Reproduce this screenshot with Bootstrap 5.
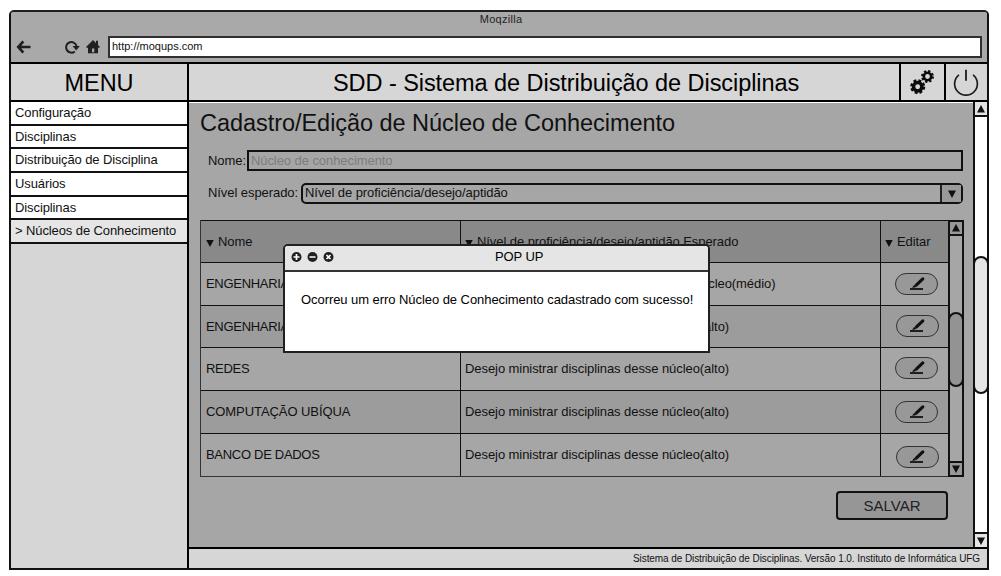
<!DOCTYPE html>
<html lang="pt-BR">
<head>
<meta charset="utf-8">
<meta name="viewport" content="width=device-width, initial-scale=1">
<title>SDD - Sistema de Distribuição de Disciplinas</title>
<link href="https://cdn.jsdelivr.net/npm/bootstrap@5.3.0/dist/css/bootstrap.min.css" rel="stylesheet">
<style>
  body { font-family: "Liberation Sans", Arial, sans-serif; font-size: 13px; line-height: 16px; letter-spacing: -.07px; color: #111; background: #fff; overflow: hidden; }
  svg { display: block; flex: none; }
  .browser { width: 980px; height: 560px; margin: 10px 0 0 9px; border: 2px solid #111; border-top-color: #231f20; border-radius: 5px 5px 0 0; background: #d6d6d6; }
  .chrome { height: 52px; background: #a9a9a9; border-bottom: 2px solid #000; border-radius: 3px 3px 0 0; }
  .chrome-title { font-size: 11px; line-height: 15px; letter-spacing: .28px; height: 24px; padding-left: 4px; color: #222; }
  .chrome-bar { height: 22px; padding: 0 5px; }
  .reload { margin-left: 32px; }
  .house { margin-left: 6px; }
  .address { height: 22px; border: 2px solid #332e2f; background: #fff; font-size: 11px; line-height: 17px; letter-spacing: 0; padding-left: 2px; }
  .menu-col { width: 178px; flex: none; border-right: 2px solid #000; }
  .head-cell { height: 38px; border-bottom: 2px solid #000; background: #d6d6d6; font-size: 23.5px; line-height: 38px; letter-spacing: -.06px; color: #000; }
  .app-title { padding-left: 144px; }
  .gear-cell { width: 45px; border-left: 2px solid #000; }
  .power-cell { width: 43px; border-left: 2px solid #000; }
  .menu-item { height: 23.67px; padding-left: 4px; border-bottom: 2px solid #111; background: #fff; line-height: 21px; letter-spacing: -.1px; }
  .menu-item.current { background: #e5e5e5; }
  .page-area { height: 445px; background: #a6a6a6; border-top: 1px solid #fff; padding: 0 11px; }
  .page-title { font-size: 23.5px; line-height: 28px; letter-spacing: -.045px; font-weight: 400; margin: 6px 0 13px; }
  .field-row { padding: 0 1px 0 8px; }
  .box-input { height: 21px; margin-left: 1px; border: 2px solid #111; line-height: 17px; padding-left: 2px; color: #7d7d7d; }
  .level-row { margin-top: 12px; }
  .level-row > span { padding-bottom: 2px; }
  .box-select { height: 21px; margin-left: 3px; border: 2px solid #111; border-radius: 5px; line-height: 16px; padding-left: 2px; }
  .select-arrow { width: 21px; height: 17px; border-left: 2px solid #222; background: #9a9a9a; }
  .grid-wrap { height: 257px; margin-top: 16px; }
  .grid-table { width: 748px; border-left: 1px solid #333; border-bottom: 1px solid #333; }
  .grid-row { height: 43px; border-top: 1px solid #111; }
  .grid-row.short { height: 42px; }
  .grid-row.head { height: 42px; background: #898989; }
  .grid-row.alt { background: #9c9c9c; }
  .c-name { width: 259px; padding-left: 5px; }
  .c-level { width: 420px; padding-left: 4px; border-left: 1px solid #111; }
  .c-edit { width: 68px; border-left: 1px solid #111; }
  .c-level.wide { padding-left: 36px; }
  .caps { letter-spacing: -.3px; }
  .pill { width: 43px; height: 22px; margin-left: 14px; padding: 0; border: 1px solid #333; border-radius: 11px; background: #989898; }
  .pill-shift { margin-left: 15px; }
  .pill-lift { margin-top: -2px; }
  .pill-drop { margin-top: 4px; }
  .inner-bar { width: 16px; border: 2px solid #111; background: #a6a6a6; }
  .inner-btn { height: 14px; background: #989898; }
  .inner-thumb { position: absolute; top: 90px; left: -2px; width: 16px; height: 75px; border: 2px solid #111; border-radius: 8px; background: #939393; }
  .save { width: 112px; height: 29px; border: 2px solid #111; border-radius: 4px; background: #969696; font-size: 15px; line-height: 25px; letter-spacing: 0; margin: 14px 16px 0 0; padding: 0; color: #222; }
  .outer-bar { width: 12px; flex: none; height: 445px; background: #fff; box-shadow: -2px 0 0 #111; }
  .outer-btn { height: 15px; background: #e5e5e5; }
  .btn-top { border-bottom: 2px solid #111; }
  .btn-bottom { border-top: 2px solid #111; }
  .outer-thumb { position: absolute; top: 154px; left: -2px; width: 16px; height: 138px; border: 2px solid #111; border-radius: 8px; background: #e5e5e5; }
  .foot { height: 21px; border-top: 2px solid #000; font-size: 10px; line-height: 20px; letter-spacing: -.081px; padding-right: 7px; background: #d6d6d6; }
  .popup { position: absolute; left: 283px; top: 244px; width: 427px; height: 109px; border: 2px solid #231f20; border-radius: 5px 5px 0 0; background: #fff; color: #000; }
  .popup-head { height: 26px; background: #e5e5e5; border-bottom: 2px solid #333; border-radius: 3px 3px 0 0; padding: 0 0 2px 6px; }
  .popup-title { margin-left: 161px; letter-spacing: -.1px; }
  .popup-text { padding: 20px 0 0 16px; letter-spacing: -.06px; }
</style>
</head>
<body>
<svg width="0" height="0" class="position-absolute" aria-hidden="true">
  <symbol id="down" viewBox="0 0 8 8"><path d="M0 .5h8L4 8z" fill="#111"/></symbol>
  <symbol id="up" viewBox="0 0 8 8"><path d="M0 7.500h8L4 0z" fill="#111"/></symbol>
  <symbol id="pencil" viewBox="0 0 41 20"><path d="M14 15h13" stroke="#111" stroke-width="1.800"/><path d="M20.500 10.800 26.800 4.900" stroke="#111" stroke-width="3.200" stroke-linecap="round"/><path d="M18.200 10.800l2.300 2.300-4.400 1z" fill="#111"/></symbol>
</svg>

<div class="browser">
  <header class="chrome">
    <div class="chrome-title text-center">Moqzilla</div>
    <div class="chrome-bar d-flex align-items-center">
      <svg width="16" height="16" viewBox="0 0 16 16" fill="none" stroke="#231f20" stroke-width="2.700"><path d="M7.300 2.300 2.300 8l5 5.700M2.500 8h12"/></svg>
      <svg class="reload" width="16" height="16" viewBox="0 0 16 16"><path d="M10.800 12.400A5.300 5.300 0 1 1 12.500 7" fill="none" stroke="#231f20" stroke-width="2"/><path d="M8.600 7h7.200l-3.600 4.400z" fill="#231f20"/></svg>
      <svg class="house" width="14" height="16" viewBox="0 0 14 16" fill="#231f20"><path fill-rule="evenodd" d="M7 1 0 8l.8.8H2V14.300h10V8.800h1.200L14 8l-2-2V1.800h-2V4zM6 9.600h2.300v3.600H6z"/></svg>
      <div class="address ms-2 flex-grow-1">http://moqups.com</div>
    </div>
  </header>

  <div class="d-flex">
    <nav class="menu-col">
      <div class="head-cell text-center">MENU</div>
      <div class="menu-item">Configuração</div>
      <div class="menu-item">Disciplinas</div>
      <div class="menu-item">Distribuição de Disciplina</div>
      <div class="menu-item">Usuários</div>
      <div class="menu-item">Disciplinas</div>
      <div class="menu-item current">&gt; Núcleos de Conhecimento</div>
    </nav>

    <div class="flex-grow-1">
      <div class="d-flex">
        <div class="head-cell app-title flex-grow-1">SDD - Sistema de Distribuição de Disciplinas</div>
        <div class="head-cell gear-cell">
          <svg width="43" height="36" viewBox="901 64 43 36" fill="none" stroke="#0a0a0a">
            <circle cx="917.700" cy="86.700" r="4.200" stroke-width="3.500"/><circle cx="917.700" cy="86.700" r="6.300" stroke-width="2.400" stroke-dasharray="2.800 2.148"/>
            <circle cx="927.500" cy="76.500" r="3.700" stroke-width="2.600"/><circle cx="927.500" cy="76.500" r="5.500" stroke-width="1.900" stroke-dasharray="2.300 2.020"/>
          </svg>
        </div>
        <div class="head-cell power-cell">
          <svg width="41" height="36" viewBox="946 64 41 36" fill="none" stroke="#1a1a1a"><path d="M959 74.800a11.400 11.400 0 1 0 14 0" stroke-width="1.700"/><path d="M966 69.800v11" stroke-width="1.800"/></svg>
        </div>
      </div>

      <div class="d-flex">
        <main class="page-area flex-grow-1">
          <h1 class="page-title">Cadastro/Edição de Núcleo de Conhecimento</h1>
          <div class="field-row d-flex align-items-center">
            <span>Nome:</span>
            <div class="box-input flex-grow-1">Núcleo de conhecimento</div>
          </div>
          <div class="field-row level-row d-flex align-items-center">
            <span>Nível esperado:</span>
            <div class="box-select flex-grow-1 d-flex">
              <span class="flex-grow-1">Nível de proficiência/desejo/aptidão</span>
              <span class="select-arrow d-flex align-items-center justify-content-center"><svg width="8" height="8"><use href="#down"/></svg></span>
            </div>
          </div>

          <div class="grid-wrap d-flex">
            <div class="grid-table">
              <div class="grid-row head d-flex">
                <div class="c-name d-flex align-items-center"><svg class="mt-1" width="8" height="8" viewBox="0 1 8 8"><use href="#down" width="8" height="8"/></svg><span class="ms-1">Nome</span></div>
                <div class="c-level d-flex align-items-center"><svg class="mt-1" width="8" height="8" viewBox="0 1 8 8"><use href="#down" width="8" height="8"/></svg><span class="ms-1">Nível de proficiência/desejo/aptidão Esperado</span></div>
                <div class="c-edit d-flex align-items-center ps-1"><svg class="mt-1" width="8" height="8" viewBox="0 1 8 8"><use href="#down" width="8" height="8"/></svg><span class="ms-1">Editar</span></div>
              </div>
              <div class="grid-row d-flex">
                <div class="c-name caps d-flex align-items-center">ENGENHARIA</div>
                <div class="c-level wide d-flex align-items-center">Desejo ministrar disciplinas desse núcleo(médio)</div>
                <div class="c-edit d-flex align-items-center"><button class="pill"><svg width="41" height="20"><use href="#pencil" width="41" height="20"/></svg></button></div>
              </div>
              <div class="grid-row short alt d-flex">
                <div class="c-name caps d-flex align-items-center">ENGENHARIA</div>
                <div class="c-level d-flex align-items-center">Desejo ministrar disciplinas desse núcleo(alto)</div>
                <div class="c-edit d-flex align-items-center"><button class="pill pill-shift pill-lift"><svg width="41" height="20"><use href="#pencil" x="-1" width="41" height="20"/></svg></button></div>
              </div>
              <div class="grid-row d-flex">
                <div class="c-name caps d-flex align-items-center">REDES</div>
                <div class="c-level d-flex align-items-center">Desejo ministrar disciplinas desse núcleo(alto)</div>
                <div class="c-edit d-flex align-items-center"><button class="pill pill-lift"><svg width="41" height="20"><use href="#pencil" width="41" height="20"/></svg></button></div>
              </div>
              <div class="grid-row alt d-flex">
                <div class="c-name d-flex align-items-center">COMPUTAÇÃO UBÍQUA</div>
                <div class="c-level d-flex align-items-center">Desejo ministrar disciplinas desse núcleo(alto)</div>
                <div class="c-edit d-flex align-items-center"><button class="pill"><svg width="41" height="20"><use href="#pencil" width="41" height="20"/></svg></button></div>
              </div>
              <div class="grid-row d-flex">
                <div class="c-name caps d-flex align-items-center">BANCO DE DADOS</div>
                <div class="c-level d-flex align-items-center">Desejo ministrar disciplinas desse núcleo(alto)</div>
                <div class="c-edit d-flex align-items-center"><button class="pill pill-shift pill-drop"><svg width="41" height="20"><use href="#pencil" x="-1" width="41" height="20"/></svg></button></div>
              </div>
            </div>
            <div class="inner-bar position-relative">
              <div class="d-flex flex-column justify-content-between h-100">
                <div class="inner-btn btn-top d-flex align-items-center justify-content-center"><svg width="8" height="8"><use href="#up"/></svg></div>
                <div class="inner-btn btn-bottom d-flex align-items-center justify-content-center"><svg width="8" height="8"><use href="#down"/></svg></div>
              </div>
              <div class="inner-thumb"></div>
            </div>
          </div>
          <div class="d-flex justify-content-end"><button class="save">SALVAR</button></div>
        </main>

        <div class="outer-bar position-relative">
          <div class="d-flex flex-column justify-content-between h-100">
            <div class="outer-btn btn-top d-flex align-items-center justify-content-center"><svg width="8" height="8"><use href="#up"/></svg></div>
            <div class="outer-btn btn-bottom d-flex align-items-center justify-content-center"><svg width="8" height="8"><use href="#down"/></svg></div>
          </div>
          <div class="outer-thumb"></div>
        </div>
      </div>

      <footer class="foot text-end">Sistema de Distribuição de Disciplinas. Versão 1.0. Instituto de Informática UFG</footer>
    </div>
  </div>
</div>

<div class="popup" role="dialog">
  <div class="popup-head d-flex align-items-center">
    <svg width="43" height="12" viewBox="0 0 43 12"><g fill="#231f20"><circle cx="5.500" cy="6" r="5"/><circle cx="21.500" cy="6" r="5"/><circle cx="37.500" cy="6" r="5"/></g><path d="M2.500 6h6M5.500 3v6M18.500 6h6M35.500 4l4 4M39.500 4l-4 4" stroke="#fff" stroke-width="1.700"/></svg>
    <span class="popup-title">POP UP</span>
  </div>
  <div class="popup-text">Ocorreu um erro Núcleo de Conhecimento cadastrado com sucesso!</div>
</div>
<script src="https://cdn.jsdelivr.net/npm/bootstrap@5.3.0/dist/js/bootstrap.bundle.min.js"></script>
</body>
</html>
